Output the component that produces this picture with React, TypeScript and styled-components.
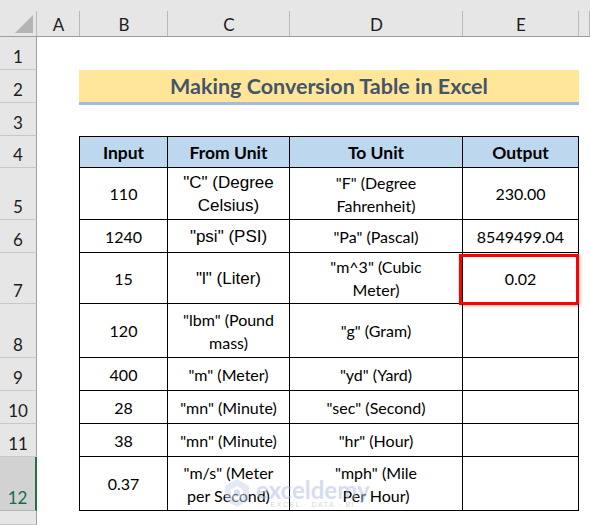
import React from "react";
import styled, { createGlobalStyle } from "styled-components";

const Global = createGlobalStyle`
  html, body { margin: 0; padding: 0; background: #fff; }
  body { font-family: Lato, "Liberation Sans", sans-serif; }
  #root { width: 590px; height: 525px; overflow: hidden; }
`;

const CALIBRI = `Lato, "Noto Sans", sans-serif`;
const ARIAL = `"Liberation Sans", Arial, sans-serif`;

const Sheet = styled.div`
  position: relative;
  width: 590px;
  height: 525px;
  overflow: hidden;
  background: #fff;
  display: flex;
  flex-direction: column;
  font-family: ${CALIBRI};
`;

const HeaderRow = styled.div`
  display: flex;
  flex: none;
  height: 37px;
  background: #e6e6e6;
  border-bottom: 1px solid #9e9e9e;
  box-sizing: border-box;
`;

const Corner = styled.div`
  position: relative;
  flex: none;
  width: 37px;
  &::before {
    content: "";
    position: absolute;
    left: 15px;
    top: 15px;
    width: 18px;
    height: 18px;
    background: #b4b4b4;
    clip-path: polygon(100% 0, 100% 100%, 0 100%);
  }
  &::after {
    content: "";
    position: absolute;
    right: 0;
    top: 11px;
    bottom: 0;
    width: 1px;
    background: #b9b9b9;
  }
`;

const ColHead = styled.div<{ $w: number }>`
  position: relative;
  flex: none;
  width: ${(p) => p.$w}px;
  display: flex;
  justify-content: center;
  align-items: flex-end;
  padding-bottom: 1px;
  box-sizing: border-box;
  font-size: 17px;
  color: #1c1c1c;
  &::after {
    content: "";
    position: absolute;
    right: 0;
    top: 11px;
    bottom: 0;
    width: 1px;
    background: #b9b9b9;
  }
`;

const Row = styled.div<{ $h: number }>`
  display: flex;
  flex: none;
  height: ${(p) => p.$h}px;
`;

const RowHead = styled.div<{ $sel?: boolean }>`
  flex: none;
  width: 37px;
  box-sizing: border-box;
  background: ${(p) => (p.$sel ? "#d2d2d2" : "#e6e6e6")};
  border-right: ${(p) => (p.$sel ? "2px solid #217346" : "1px solid #9e9e9e")};
  border-bottom: 1px solid ${(p) => (p.$sel ? "#b4b4b4" : "#c8c8c8")};
  display: flex;
  justify-content: center;
  align-items: flex-end;
  padding-bottom: 2px;
  font-size: 17px;
  color: ${(p) => (p.$sel ? "#1d6b45" : "#1c1c1c")};
`;

const Blank = styled.div<{ $w: number }>`
  flex: none;
  width: ${(p) => p.$w}px;
`;

const Title = styled.div`
  flex: none;
  align-self: flex-start;
  width: 500px;
  height: 35px;
  box-sizing: border-box;
  background: #ffe699;
  border-bottom: 3px solid #a4b8e0;
  display: flex;
  justify-content: center;
  align-items: center;
  font-weight: 700;
  font-size: 21.5px;
  color: #44546a;
`;

const TCell = styled.div<{
  $w: number;
  $first?: boolean;
  $top?: boolean;
  $head?: boolean;
  $arial?: boolean;
}>`
  position: relative;
  flex: none;
  width: ${(p) => p.$w}px;
  box-sizing: border-box;
  border-right: 1px solid #000;
  border-bottom: 1px solid #000;
  border-left: ${(p) => (p.$first ? "1px solid #000" : "none")};
  border-top: ${(p) => (p.$top ? "1px solid #000" : "none")};
  background: ${(p) => (p.$head ? "#bdd7ee" : "transparent")};
  display: flex;
  justify-content: center;
  align-items: center;
  text-align: center;
  line-height: 23px;
  color: #000;
  font-family: ${(p) => (p.$arial ? ARIAL : CALIBRI)};
  font-size: ${(p) => (p.$head ? "17.5px" : p.$arial ? "17px" : "16px")};
  font-weight: ${(p) => (p.$head ? 700 : 400)};
`;

const Highlight = styled.div`
  position: absolute;
  left: -4px;
  right: -1px;
  top: 1px;
  bottom: -2px;
  border: 3px solid #ff0000;
  box-shadow: 1px 1px 3px rgba(0, 0, 0, 0.3);
  pointer-events: none;
`;

const Watermark = styled.div`
  position: absolute;
  left: 224px;
  top: 478px;
  display: flex;
  align-items: center;
  gap: 6px;
  opacity: 0.5;
  pointer-events: none;
`;

const WmText = styled.div`
  display: flex;
  flex-direction: column;
  align-items: center;
`;

const WmName = styled.span`
  font-family: ${CALIBRI};
  font-weight: 700;
  font-size: 24px;
  line-height: 24px;
  color: #aebde0;
`;

const WmSub = styled.span`
  font-family: ${ARIAL};
  font-size: 7px;
  letter-spacing: 1.5px;
  color: #b0b0b0;
  margin-top: -1px;
`;

type Cell = { t: string; arial?: boolean; hl?: boolean };

const bodyWidths = [89, 122, 173, 116];

const head: Cell[] = [
  { t: "Input" },
  { t: "From Unit" },
  { t: "To Unit" },
  { t: "Output" },
];

const data: { h: number; cells: Cell[] }[] = [
  { h: 52, cells: [{ t: "110" }, { t: '"C" (Degree\nCelsius)', arial: true }, { t: '"F" (Degree\nFahrenheit)' }, { t: "230.00" }] },
  { h: 33, cells: [{ t: "1240" }, { t: '"psi" (PSI)', arial: true }, { t: '"Pa" (Pascal)' }, { t: "8549499.04" }] },
  { h: 51, cells: [{ t: "15" }, { t: '"l" (Liter)', arial: true }, { t: '"m^3" (Cubic\nMeter)' }, { t: "0.02", hl: true }] },
  { h: 54, cells: [{ t: "120" }, { t: '"lbm" (Pound\nmass)' }, { t: '"g" (Gram)' }, { t: "" }] },
  { h: 33, cells: [{ t: "400" }, { t: '"m" (Meter)' }, { t: '"yd" (Yard)' }, { t: "" }] },
  { h: 33, cells: [{ t: "28" }, { t: '"mn" (Minute)' }, { t: '"sec" (Second)' }, { t: "" }] },
  { h: 33, cells: [{ t: "38" }, { t: '"mn" (Minute)' }, { t: '"hr" (Hour)' }, { t: "" }] },
  { h: 54, cells: [{ t: "0.37" }, { t: '"m/s" (Meter\nper Second)' }, { t: '"mph" (Mile\nPer Hour)' }, { t: "" }] },
];

const Lines = ({ t }: { t: string }) => {
  const parts = t.split("\n");
  return (
    <span>
      {parts.map((p, i) => (
        <React.Fragment key={i}>
          {i > 0 && <br />}
          {p}
        </React.Fragment>
      ))}
    </span>
  );
};

const LogoIcon = () => (
  <svg width="26" height="30" viewBox="0 0 26 30">
    <polygon points="13,1 25,8 25,22 13,29 1,22 1,8" fill="#c9d4ec" />
    <polygon points="13,8 19,11.5 19,18.5 13,22 7,18.5 7,11.5" fill="#ffffff" />
    <polygon points="13,11 16,13 16,17 13,19 10,17 10,13" fill="#aebde0" />
  </svg>
);

export default function App() {
  return (
    <>
      <Global />
      <Sheet>
        <HeaderRow>
          <Corner />
          <ColHead $w={43}>A</ColHead>
          <ColHead $w={88}>B</ColHead>
          <ColHead $w={122}>C</ColHead>
          <ColHead $w={173}>D</ColHead>
          <ColHead $w={116}>E</ColHead>
          <ColHead $w={11} />
        </HeaderRow>

        <Row $h={33}>
          <RowHead>1</RowHead>
        </Row>
        <Row $h={33}>
          <RowHead>2</RowHead>
          <Blank $w={42} />
          <Title>Making Conversion Table in Excel</Title>
        </Row>
        <Row $h={33}>
          <RowHead>3</RowHead>
        </Row>
        <Row $h={32}>
          <RowHead>4</RowHead>
          <Blank $w={42} />
          {head.map((c, i) => (
            <TCell key={i} $w={bodyWidths[i]} $first={i === 0} $top $head>
              {c.t}
            </TCell>
          ))}
        </Row>
        {data.map((r, ri) => (
          <Row key={ri} $h={r.h}>
            <RowHead $sel={ri === data.length - 1}>{ri + 5}</RowHead>
            <Blank $w={42} />
            {r.cells.map((c, i) => (
              <TCell key={i} $w={bodyWidths[i]} $first={i === 0} $arial={c.arial}>
                <Lines t={c.t} />
                {c.hl && <Highlight />}
              </TCell>
            ))}
          </Row>
        ))}
        <Row $h={14}>
          <RowHead />
        </Row>

        <Watermark>
          <LogoIcon />
          <WmText>
            <WmName>exceldemy</WmName>
            <WmSub>EXCEL · DATA · BI</WmSub>
          </WmText>
        </Watermark>
      </Sheet>
    </>
  );
}
